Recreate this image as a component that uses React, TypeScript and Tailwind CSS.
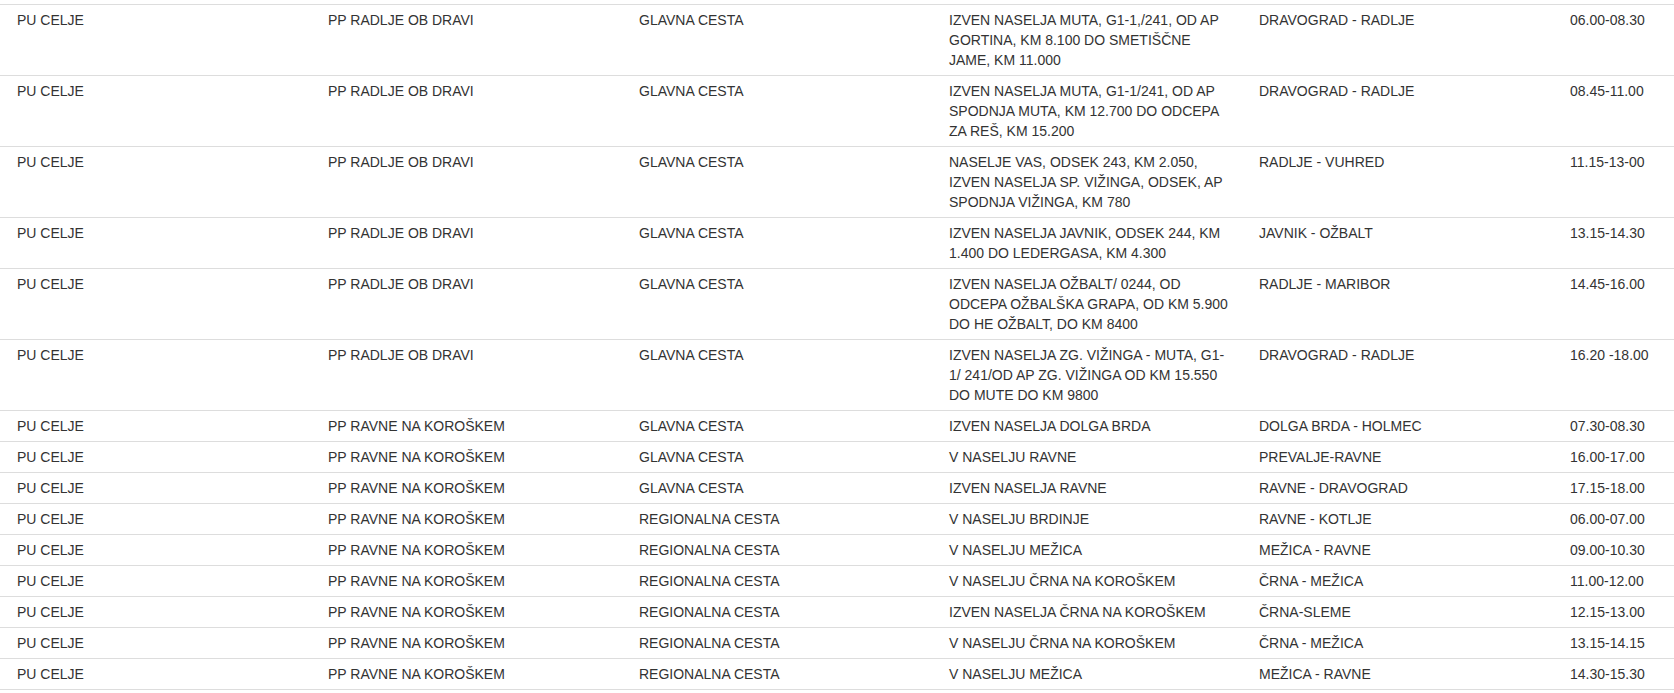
type Row = {
  unit: string;
  station: string;
  road: string;
  place: string[];
  route: string;
  time: string;
};

const koroska = "PP RAVNE NA KOROŠKEM";
const radlje = "PP RADLJE OB DRAVI";

const rows: Row[] = [
  {
    unit: "PU CELJE",
    station: radlje,
    road: "GLAVNA CESTA",
    place: ["IZVEN NASELJA MUTA, G1-1,/241, OD AP", "GORTINA, KM 8.100 DO SMETIŠČNE", "JAME, KM 11.000"],
    route: "DRAVOGRAD - RADLJE",
    time: "06.00-08.30",
  },
  {
    unit: "PU CELJE",
    station: radlje,
    road: "GLAVNA CESTA",
    place: ["IZVEN NASELJA MUTA, G1-1/241, OD AP", "SPODNJA MUTA, KM 12.700 DO ODCEPA", "ZA REŠ, KM 15.200"],
    route: "DRAVOGRAD - RADLJE",
    time: "08.45-11.00",
  },
  {
    unit: "PU CELJE",
    station: radlje,
    road: "GLAVNA CESTA",
    place: ["NASELJE VAS, ODSEK 243, KM 2.050,", "IZVEN NASELJA SP. VIŽINGA, ODSEK, AP", "SPODNJA VIŽINGA, KM 780"],
    route: "RADLJE - VUHRED",
    time: "11.15-13-00",
  },
  {
    unit: "PU CELJE",
    station: radlje,
    road: "GLAVNA CESTA",
    place: ["IZVEN NASELJA JAVNIK, ODSEK 244, KM", "1.400 DO LEDERGASA, KM 4.300"],
    route: "JAVNIK - OŽBALT",
    time: "13.15-14.30",
  },
  {
    unit: "PU CELJE",
    station: radlje,
    road: "GLAVNA CESTA",
    place: ["IZVEN NASELJA OŽBALT/ 0244, OD", "ODCEPA OŽBALŠKA GRAPA, OD KM 5.900", "DO HE OŽBALT, DO KM 8400"],
    route: "RADLJE - MARIBOR",
    time: "14.45-16.00",
  },
  {
    unit: "PU CELJE",
    station: radlje,
    road: "GLAVNA CESTA",
    place: ["IZVEN NASELJA ZG. VIŽINGA - MUTA, G1-", "1/ 241/OD AP ZG. VIŽINGA OD KM 15.550", "DO MUTE DO KM 9800"],
    route: "DRAVOGRAD - RADLJE",
    time: "16.20 -18.00",
  },
  { unit: "PU CELJE", station: koroska, road: "GLAVNA CESTA", place: ["IZVEN NASELJA DOLGA BRDA"], route: "DOLGA BRDA - HOLMEC", time: "07.30-08.30" },
  { unit: "PU CELJE", station: koroska, road: "GLAVNA CESTA", place: ["V NASELJU RAVNE"], route: "PREVALJE-RAVNE", time: "16.00-17.00" },
  { unit: "PU CELJE", station: koroska, road: "GLAVNA CESTA", place: ["IZVEN NASELJA RAVNE"], route: "RAVNE - DRAVOGRAD", time: "17.15-18.00" },
  { unit: "PU CELJE", station: koroska, road: "REGIONALNA CESTA", place: ["V NASELJU BRDINJE"], route: "RAVNE - KOTLJE", time: "06.00-07.00" },
  { unit: "PU CELJE", station: koroska, road: "REGIONALNA CESTA", place: ["V NASELJU MEŽICA"], route: "MEŽICA - RAVNE", time: "09.00-10.30" },
  { unit: "PU CELJE", station: koroska, road: "REGIONALNA CESTA", place: ["V NASELJU ČRNA NA KOROŠKEM"], route: "ČRNA - MEŽICA", time: "11.00-12.00" },
  { unit: "PU CELJE", station: koroska, road: "REGIONALNA CESTA", place: ["IZVEN NASELJA ČRNA NA KOROŠKEM"], route: "ČRNA-SLEME", time: "12.15-13.00" },
  { unit: "PU CELJE", station: koroska, road: "REGIONALNA CESTA", place: ["V NASELJU ČRNA NA KOROŠKEM"], route: "ČRNA - MEŽICA", time: "13.15-14.15" },
  { unit: "PU CELJE", station: koroska, road: "REGIONALNA CESTA", place: ["V NASELJU MEŽICA"], route: "MEŽICA - RAVNE", time: "14.30-15.30" },
];

const Cell = ({ children }: { children: React.ReactNode }) => (
  <div className="py-[5px] pl-[17px] whitespace-nowrap">{children}</div>
);

export default function App() {
  return (
    <div className="min-h-dvh w-full bg-white pt-[4px] font-['Liberation_Sans',Arial,sans-serif] text-[14px] leading-[20px] text-[#333]">
      <div className="border-b border-[#ddd]">
        {rows.map((r, i) => (
          <div
            key={`row-${i}`}
            className="grid grid-cols-[311px_311px_310px_310px_311px_1fr] border-t border-[#ddd]"
          >
            <Cell>{r.unit}</Cell>
            <Cell>{r.station}</Cell>
            <Cell>{r.road}</Cell>
            <Cell>
              {r.place.map((line, j) => (
                <div key={`line-${j}`}>{line}</div>
              ))}
            </Cell>
            <Cell>{r.route}</Cell>
            <Cell>{r.time}</Cell>
          </div>
        ))}
      </div>
    </div>
  );
}
